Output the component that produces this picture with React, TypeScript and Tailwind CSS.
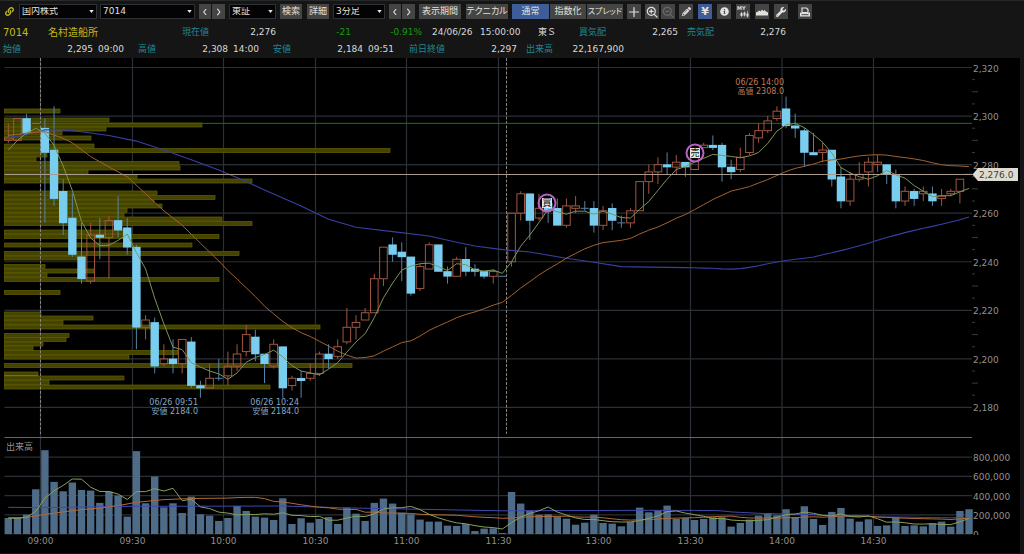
import React from "react";
import type { ReactNode } from "react";
import { FaLink, FaPencilAlt, FaWrench, FaInfoCircle } from "react-icons/fa";

type Candle = [open: number, close: number, high: number, low: number];

const candles: Candle[] = [
  [2290, 2291, 2297, 2289], [2290, 2299, 2299, 2290], [2299, 2293, 2301, 2292], [2297, 2297, 2297, 2297],
  [2295, 2285, 2299, 2256], [2286, 2266, 2304, 2263], [2269, 2256, 2274, 2251], [2258, 2243, 2268, 2242],
  [2242, 2233, 2256, 2231], [2232, 2251, 2256, 2231], [2251, 2250, 2258, 2241], [2250, 2257, 2259, 2233],
  [2257, 2253, 2267, 2250], [2254, 2246, 2258, 2243], [2246, 2213, 2247, 2204], [2213, 2216, 2218, 2208],
  [2215, 2197, 2217, 2194], [2198, 2200, 2206, 2197], [2200, 2198, 2208, 2194], [2198, 2208, 2208, 2194],
  [2207, 2189, 2209, 2188], [2189, 2188, 2191, 2184], [2188, 2192, 2198, 2188], [2192, 2192, 2200, 2191],
  [2193, 2197, 2203, 2189], [2197, 2202, 2206, 2195], [2203, 2210, 2214, 2201], [2209, 2202, 2212, 2199],
  [2202, 2198, 2202, 2190], [2197, 2206, 2208, 2196], [2205, 2188, 2205, 2184], [2189, 2192, 2193, 2187],
  [2192, 2191, 2195, 2184], [2192, 2194, 2198, 2191], [2194, 2202, 2203, 2193], [2202, 2200, 2206, 2196],
  [2201, 2205, 2208, 2200], [2207, 2213, 2221, 2206], [2213, 2215, 2218, 2208], [2216, 2219, 2221, 2216],
  [2219, 2233, 2235, 2219], [2233, 2246, 2246, 2230], [2247, 2243, 2250, 2240], [2244, 2242, 2248, 2232],
  [2242, 2227, 2242, 2226], [2229, 2238, 2239, 2228], [2237, 2247, 2248, 2237], [2247, 2236, 2247, 2236],
  [2236, 2234, 2238, 2231], [2234, 2241, 2242, 2234], [2241, 2236, 2246, 2234], [2237, 2236, 2239, 2234],
  [2236, 2234, 2236, 2233], [2234, 2236, 2237, 2231], [2234, 2234, 2234, 2234], [2240, 2260, 2260, 2238],
  [2260, 2268, 2269, 2257], [2268, 2257, 2268, 2249], [2258, 2262, 2268, 2257], [2264, 2261, 2266, 2256],
  [2262, 2255, 2266, 2255], [2255, 2263, 2266, 2254], [2262, 2263, 2267, 2260], [2262, 2262, 2265, 2261],
  [2262, 2255, 2265, 2252], [2255, 2261, 2263, 2253], [2262, 2257, 2264, 2253], [2256, 2256, 2259, 2254],
  [2256, 2261, 2262, 2254], [2261, 2273, 2273, 2261], [2273, 2277, 2280, 2268], [2277, 2280, 2283, 2272],
  [2280, 2279, 2285, 2276], [2279, 2281, 2284, 2276], [2281, 2279, 2281, 2275], [2278, 2286, 2286, 2278],
  [2287, 2288, 2289, 2287], [2288, 2287, 2292, 2286], [2288, 2279, 2289, 2273], [2279, 2277, 2282, 2274],
  [2278, 2283, 2287, 2277], [2285, 2292, 2293, 2284], [2291, 2294, 2297, 2289], [2294, 2298, 2300, 2293],
  [2299, 2302, 2304, 2298], [2303, 2296, 2308, 2295], [2296, 2295, 2301, 2291], [2294, 2285, 2295, 2279],
  [2285, 2284, 2293, 2284], [2285, 2286, 2289, 2281], [2286, 2274, 2286, 2271], [2275, 2265, 2279, 2262],
  [2265, 2274, 2277, 2263], [2274, 2276, 2281, 2273], [2277, 2281, 2283, 2271], [2280, 2281, 2284, 2277],
  [2280, 2276, 2280, 2272], [2276, 2265, 2278, 2262], [2265, 2269, 2271, 2263], [2269, 2266, 2270, 2263],
  [2268, 2269, 2271, 2265], [2268, 2265, 2271, 2263], [2266, 2267, 2270, 2263], [2268, 2269, 2270, 2267],
  [2269, 2274, 2274, 2264], [2276, 2276, 2276, 2276],
];

// thousands of shares per bar
const volumes = [
  167, 167, 202, 466, 873, 543, 445, 536, 459, 452, 324, 442, 400, 181, 863, 320, 599, 278, 320, 219, 390, 205, 191,
  136, 167, 292, 240, 181, 171, 146, 372, 104, 164, 118, 157, 177, 104, 275, 212, 136, 324, 369, 317, 223, 205, 150,
  129, 129, 87, 84, 104, 31, 56, 59, 10, 438, 317, 244, 202, 205, 177, 160, 97, 118, 202, 115, 108, 80, 125, 275, 226,
  244, 296, 157, 167, 146, 157, 174, 174, 77, 115, 150, 191, 219, 195, 258, 177, 289, 157, 94, 230, 271, 160, 129, 153,
  84, 90, 174, 84, 90, 80, 111, 129, 77, 240, 258,
];

// [centre y, right edge x]
const profile: [number, number][] = [
  [111, 60], [120, 109], [125, 202], [129, 106], [133, 62], [138, 91], [146, 94], [150.5, 390], [155, 47], [159, 36],
  [163.5, 179], [168, 180], [172, 88], [176.5, 137], [181, 252], [193, 157], [197.5, 215], [202, 154], [206, 162],
  [210.5, 127], [215, 124], [219, 222], [223.5, 252], [232, 127], [236.5, 219], [245, 192], [253.5, 239], [258, 85],
  [266.5, 45], [271, 94], [275, 47], [279.5, 219], [292.5, 60], [314, 41], [318, 93], [322.5, 63], [327, 320],
  [335.5, 69], [339.5, 66], [344, 43], [348, 33], [352.5, 178], [357, 129], [365.5, 352], [374, 38], [378, 124],
  [382.5, 49], [387, 270],
];

type Seed = [index: number, value: number];

const LEFT = 4.5;
const RIGHT = 972;
const BASE = 534;
const xAt = (i: number) => 8.3 + i * 9.15;
const priceY = (p: number) => 67.5 + (2320 - p) * 2.428;
const volumeY = (v: number) => BASE - v * 0.096;

function average(values: number[], span: number, seed: Seed[], toY: (v: number) => number) {
  const points = seed.map(([i, v]) => `${xAt(i).toFixed(1)},${toY(v).toFixed(1)}`);
  for (let i = span - 1; i < values.length; i++) {
    const slice = values.slice(i - span + 1, i + 1);
    const mean = slice.reduce((a, b) => a + b, 0) / span;
    points.push(`${xAt(i).toFixed(1)},${toY(mean).toFixed(1)}`);
  }
  return points.join(" ");
}

const closes = candles.map((c) => c[1]);
const ma5 = average(closes, 5, [[0, 2286], [1, 2290], [2, 2293], [3, 2295]], priceY);
const ma25 = average(closes, 25, [
  [0, 2292], [2, 2293], [4, 2293.6], [6, 2290.8], [7, 2289], [9, 2283.3], [11, 2279], [13, 2275], [15, 2268],
  [17, 2261], [19, 2255], [21, 2247.6], [23, 2240.3],
], priceY);
const ma75 = average(closes, 75, [
  [0, 2291], [2, 2292.5], [4, 2294.4], [6, 2294.3], [8, 2293.5], [11, 2292], [14, 2289.7], [17, 2286], [20, 2282],
  [23, 2277.8], [26, 2273], [28, 2269.5], [32, 2263], [35, 2257.5], [38, 2254.2], [42, 2252.4], [46, 2250.6],
  [49, 2248], [51, 2246.5], [54, 2245], [57, 2244], [61, 2241.4], [64, 2239.8], [67, 2238], [70, 2237.8],
], priceY);
const vol5 = average(volumes, 5, [[0, 165], [1, 163], [2, 175], [3, 235]], volumeY);
const vol25 = average(volumes, 25, [
  [0, 170], [2, 172], [4, 205], [6, 230], [8, 254], [10, 270], [12, 296], [14, 330], [17, 358], [20, 370],
], volumeY);
const vol75 = average(volumes, 75, [[0, 278], [4, 275], [12, 288], [30, 292], [37, 272], [54, 242], [70, 247]], volumeY);

const times: [number, string][] = [
  [40.5, "09:00"], [132.5, "09:30"], [223.5, "10:00"], [315.5, "10:30"], [406.5, "11:00"], [498.5, "11:30"],
  [598.5, "13:00"], [690.5, "13:30"], [782, "14:00"], [873.5, "14:30"],
];
const prices = [2320, 2300, 2280, 2260, 2240, 2220, 2200, 2180];
const minorTicks = Array.from({ length: 29 }, (_, i) => 2320 - i * 5).filter((p) => p % 20 !== 0);

function Marker({ x, y, label }: { x: number; y: number; label: string }) {
  return (
    <g>
      <rect x={x - 5} y={y - 5} width="10" height="10" fill="#e6e4e0" />
      <text x={x} y={y + 3} textAnchor="middle" fontSize="9" fill="#111">{label}</text>
      <circle cx={x} cy={y} r="8.5" fill="none" stroke="#b565c4" strokeWidth="2" />
    </g>
  );
}

function Note({ x, y, color, lines }: { x: number; y: number; color: string; lines: [string, string] }) {
  return (
    <text textAnchor="end" fontSize="8" fill={color}>
      <tspan x={x} y={y}>{lines[0]}</tspan>
      <tspan x={x} y={y + 9}>{lines[1]}</tspan>
    </text>
  );
}

function Chart() {
  return (
    <svg viewBox="0 58 1024 496" className="block h-auto w-full bg-black" role="img" aria-label="7014 3分足">
      <defs>
        <clipPath id="plotBase"><rect x="0" y="58" width="1024" height="477" /></clipPath>
      </defs>
      <g stroke="#2b3037" strokeWidth="1.2">
        {times.map(([x]) => <line key={x} x1={x} x2={x} y1="58" y2={BASE} />)}
        {prices.map((p) => <line key={p} x1={LEFT} x2={RIGHT} y1={priceY(p)} y2={priceY(p)} />)}
        {[800, 600, 400, 200, 0].map((v) => <line key={v} x1={LEFT} x2={RIGHT} y1={volumeY(v)} y2={volumeY(v)} />)}
      </g>
      <line x1={LEFT} x2={RIGHT} y1="437.5" y2="437.5" stroke="#6a6762" />
      <g fill="#444300" stroke="#626100" strokeWidth="0.7">
        {profile.map(([y, right]) => <rect key={y} x={LEFT} y={y - 2} width={right - LEFT} height="4" />)}
      </g>
      <line x1={LEFT} x2="38" y1="375.5" y2="375.5" stroke="#1f9a1a" />
      <g stroke="#85837c" strokeDasharray="3 1.5">
        <line x1="40.5" x2="40.5" y1="58" y2="434" />
        <line x1="506.5" x2="506.5" y1="58" y2="434" />
      </g>
      <line x1="34" x2={RIGHT} y1={priceY(2297)} y2={priceY(2297)} stroke="#0a7f0c" />

      {candles.map(([open, close, high, low], i) => {
        const x = xAt(i);
        const top = priceY(Math.max(open, close));
        const bottom = priceY(Math.min(open, close));
        if (close > open) {
          return (
            <g key={i} stroke="#a2563f" fill="none">
              <line x1={x} x2={x} y1={priceY(high)} y2={top} />
              <line x1={x} x2={x} y1={bottom} y2={priceY(low)} />
              <rect x={x - 3.8} y={top} width="7.6" height={bottom - top} />
            </g>
          );
        }
        return (
          <g key={i}>
            <line x1={x} x2={x} y1={priceY(high)} y2={priceY(low)} stroke="#5683a6" />
            {open === close ? (
              <line x1={x - 4} x2={x + 4} y1={top} y2={top} stroke="#5683a6" />
            ) : (
              <rect x={x - 4.2} y={top - 0.3} width="8.4" height={bottom - top + 0.6} fill="#79cef0" />
            )}
          </g>
        );
      })}

      <g fill="none">
        <polyline points={ma75} stroke="#3840a4" strokeWidth="1.1" />
        <polyline points={ma25} stroke="#a3622f" />
        <polyline points={ma5} stroke="#7c9459" />
      </g>
      <line x1={LEFT} x2={RIGHT} y1="174.5" y2="174.5" stroke="#a89a8c" />

      <g fill="#4e6b88">
        {volumes.map((v, i) => <rect key={i} x={xAt(i) - 3.7} y={volumeY(v)} width="7.4" height={BASE - volumeY(v)} />)}
      </g>
      <g fill="none">
        <polyline points={vol75} stroke="#4048b0" />
        <polyline points={vol25} stroke="#b06a38" />
        <polyline points={vol5} stroke="#87a058" />
      </g>

      <Marker x={547} y={203} label="買" />
      <Marker x={695} y={153} label="売" />
      <Note x={198} y={405} color="#83a8c8" lines={["06/26 09:51", "安値 2184.0"]} />
      <Note x={299} y={405} color="#83a8c8" lines={["06/26 10:24", "安値 2184.0"]} />
      <Note x={784} y={85} color="#c07a57" lines={["06/26 14:00", "高値 2308.0"]} />

      <g stroke="#3a3a3a">
        {minorTicks.map((p) => (
          <line key={p} x1={RIGHT} x2={RIGHT + (p % 10 === 0 ? 6 : 3)} y1={priceY(p)} y2={priceY(p)} />
        ))}
      </g>
      <g fontSize="9" fill="#93908b">
        {prices.map((p) => <text key={p} x="973" y={priceY(p) + 4}>{p.toLocaleString("en-US")}</text>)}
        {[800, 600, 400, 200].map((v) => (
          <text key={v} x="973" y={volumeY(v) + 4}>{(v * 1000).toLocaleString("en-US")}</text>
        ))}
        <text x="973" y="538" clipPath="url(#plotBase)">0</text>
        {times.map(([x, t]) => <text key={t} x={x} y="544" textAnchor="middle">{t}</text>)}
        <text x="6" y="450">出来高</text>
      </g>
      <path d="M972.5 174.5 978 168h40v13h-40Z" fill="#dedbd0" />
      <text x="979" y="178" fontSize="9" fill="#3c3c3a">2,276.0</text>
      <rect x="1020" y="58" width="4" height="496" fill="#151517" />
      <rect x="0" y="553" width="1024" height="1" fill="#151517" />
    </svg>
  );
}

function Picker({ label, value, className }: { label: string; value: string; className: string }) {
  return (
    <label className={`relative block h-[15px] shrink-0 ${className}`}>
      <select
        aria-label={label}
        className="block h-full w-full appearance-none border border-[#2d3034] bg-[#030303] pl-[2px] text-[9px] leading-none text-[#e0e0de] outline-none"
      >
        <option>{value}</option>
      </select>
      <svg viewBox="0 0 6 4" className="pointer-events-none absolute top-[6px] right-[3px] h-[3px] w-[5px]" aria-hidden="true">
        <path d="M0 0h6L3 4Z" fill="#e4e4e4" />
      </svg>
    </label>
  );
}

function Tool({ label, className = "w-[14px]", active = false, children }: {
  label?: string; className?: string; active?: boolean; children: ReactNode;
}) {
  return (
    <button
      type="button"
      aria-label={label}
      className={`flex h-[15px] shrink-0 items-center justify-center text-[9px] leading-none whitespace-nowrap text-[#e2e2de] ${active ? "bg-[#3d5c98]" : "bg-[#444444]"} ${className}`}
    >
      {children}
    </button>
  );
}

function Glyph({ d, dim = false }: { d: string; dim?: boolean }) {
  return (
    <svg viewBox="0 0 14 14" className="size-[14px]" fill="none" stroke={dim ? "#6c6863" : "#e0e0dc"} strokeWidth="1.2" strokeLinecap="round" aria-hidden="true">
      <path d={d} />
    </svg>
  );
}

function Steps({ unit }: { unit: string }) {
  return (
    <div className="flex w-[26px] gap-px">
      <Tool label={`前の${unit}`} className="w-[12px]"><Glyph d="M8 4 5.500 7 8 10" /></Tool>
      <Tool label={`次の${unit}`} className="w-[13px]"><Glyph d="M6 4 8.500 7 6 10" /></Tool>
    </div>
  );
}

function Toolbar() {
  return (
    <div className="flex h-[22px] items-center gap-[4px] border-t border-[#26282a] pl-[5px]">
      <FaLink className="mr-px size-[9px] text-[#c0b61e]" aria-hidden="true" />
      <Picker label="市場区分" value="国内株式" className="w-[78px]" />
      <Picker label="銘柄コード" value="7014" className="-ml-px w-[95px]" />
      <Steps unit="銘柄" />
      <Picker label="取引所" value="東証" className="w-[47px]" />
      <Tool className="w-[22px]">検索</Tool>
      <Tool className="ml-px w-[22px]">詳細</Tool>
      <Picker label="足種" value="3分足" className="w-[52px]" />
      <Steps unit="足種" />
      <Tool className="w-[42px]">表示期間</Tool>
      <Tool className="ml-px w-[42px] [font-feature-settings:'palt']">テクニカル</Tool>
      <div className="flex gap-px">
        <Tool active className="w-[37px]">通常</Tool>
        <Tool className="w-[36px]">指数化</Tool>
        <Tool className="w-[36px] [font-feature-settings:'palt']"><span className="text-[8px]">スプレッド</span></Tool>
      </div>
      <Tool label="十字線"><Glyph d="M7 2.500v9M2.500 7h9" /></Tool>
      <div className="flex gap-[2px]">
        <Tool label="拡大"><Glyph d="M10.300 6.300a4 4 0 1 1-8 0a4 4 0 1 1 8 0M9.300 9.300 12 12M4.500 6.300h3.600M6.300 4.500v3.600" /></Tool>
        <Tool label="縮小"><Glyph dim d="M10.300 6.300a4 4 0 1 1-8 0a4 4 0 1 1 8 0M9.300 9.300 12 12M4.500 6.300h3.600" /></Tool>
      </div>
      <div className="flex gap-[5px]">
        <Tool label="描画"><FaPencilAlt className="size-[9px]" /></Tool>
        <Tool label="価格表示" active><span className="text-[11px] font-bold">¥</span></Tool>
        <Tool label="情報"><FaInfoCircle className="size-[9px]" /></Tool>
        <Tool label="マイチャート">
          <svg viewBox="0 0 14 14" className="size-[14px]" aria-hidden="true" fill="#e0e0dc">
            <text x="1" y="5" fontSize="5" fontWeight="700">MY</text>
            <path d="M4.500 8h2v3h-2zM5.200 7h.6v5h-.6zM7.500 7.500h2v3h-2zM8.200 6.500h.6v5h-.6zM10.500 8.500h2v3h-2zM11.200 6h.6v6.500h-.6z" />
          </svg>
        </Tool>
        <Tool label="価格帯別出来高">
          <svg viewBox="0 0 14 14" className="size-[14px]" aria-hidden="true" fill="#e0e0dc">
            <path d="M1 10.500V7.500L3 6.500 4.500 5.500 5.500 6.500 7 4.500 8.200 6 9.500 5 11 6.500 13 7.500V10.500Z" />
          </svg>
        </Tool>
        <Tool label="設定"><FaWrench className="size-[10px]" /></Tool>
      </div>
      <Tool label="印刷" className="ml-[6px] w-[14px]">
        <svg viewBox="0 0 14 14" className="size-[14px]" aria-hidden="true">
          <path d="M4 7V3h4.500L10 4.500V7M4 7.500h6" fill="none" stroke="#e0e0dc" strokeWidth="1.2" />
          <path d="M2 7.500h10V11.500H2Z" fill="#e0e0dc" />
          <path d="M3.500 9.700h7" stroke="#444" />
        </svg>
      </Tool>
    </div>
  );
}

function Quote({ label, value, time, className }: { label: string; value: string; time?: string; className: string }) {
  return (
    <div className={`flex shrink-0 justify-between ${className}`}>
      <span className="text-[#1f8794]">{label}</span>
      <span className="flex gap-[5px]">
        <span>{value}</span>
        {time && <span>{time}</span>}
      </span>
    </div>
  );
}

export default function App() {
  return (
    <div className="min-h-screen bg-[#151515] font-['DejaVu_Sans','Noto_Sans_CJK_JP',sans-serif] text-[9px] text-[#dad9d5]">
      <header className="whitespace-nowrap">
        <Toolbar />
        <div className="mt-[2px] flex h-[17px] items-center pl-[3px] leading-[17px]">
          <span className="w-[45px] shrink-0 text-[10px] text-[#c2ba20]">7014</span>
          <h1 className="w-[134px] shrink-0 text-[10px] text-[#c2ba20]">名村造船所</h1>
          <Quote label="現在値" value="2,276" className="w-[94px]" />
          <span className="w-[75px] shrink-0 text-right text-[#149c10]">-21</span>
          <span className="w-[71px] shrink-0 text-right text-[#149c10]">-0.91%</span>
          <span className="ml-[10px] w-[48px] shrink-0">24/06/26</span>
          <span className="w-[58px] shrink-0">15:00:00</span>
          <span className="w-[41px] shrink-0">東Ｓ</span>
          <Quote label="買気配" value="2,265" className="w-[99px]" />
          <Quote label="売気配" value="2,276" className="ml-[9px] w-[99px]" />
        </div>
        <div className="flex h-[17px] items-center pl-[3px] leading-[17px]">
          <Quote label="始値" value="2,295" time="09:00" className="w-[121px]" />
          <Quote label="高値" value="2,308" time="14:00" className="ml-[14px] w-[121px]" />
          <Quote label="安値" value="2,184" time="09:51" className="ml-[14px] w-[121px]" />
          <Quote label="前日終値" value="2,297" className="ml-[15px] w-[108px]" />
          <Quote label="出来高" value="22,167,900" className="ml-[9px] w-[98px]" />
        </div>
      </header>
      <main>
        <Chart />
      </main>
    </div>
  );
}
